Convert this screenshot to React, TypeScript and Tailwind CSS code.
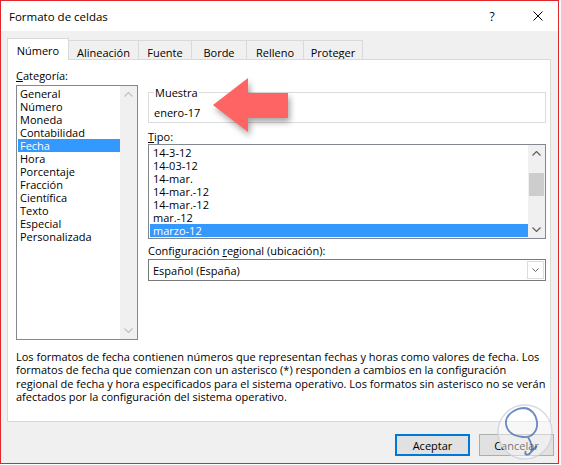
import React from 'react';

const categorias = [
  'General',
  'Número',
  'Moneda',
  'Contabilidad',
  'Fecha',
  'Hora',
  'Porcentaje',
  'Fracción',
  'Científica',
  'Texto',
  'Especial',
  'Personalizada',
];

const tipos = ['14-3-12', '14-03-12', '14-mar.', '14-mar.-12', '14-mar.-12', 'mar.-12', 'marzo-12'];

const tabs = [
  { label: 'Alineación', w: 'w-[70px]' },
  { label: 'Fuente', w: 'w-[53px]' },
  { label: 'Borde', w: 'w-[55px]' },
  { label: 'Relleno', w: 'w-[57px]' },
  { label: 'Proteger', w: 'w-[59px]' },
];

function Chevron({ up, color }: { up?: boolean; color: string }) {
  return (
    <svg width="9" height="5" viewBox="0 0 9 5">
      <polyline
        points={up ? '0.5,4.5 4.5,0.5 8.5,4.5' : '0.5,0.5 4.5,4.5 8.5,0.5'}
        fill="none"
        stroke={color}
        strokeWidth="1.2"
      />
    </svg>
  );
}

function ScrollBar({ enabled }: { enabled?: boolean }) {
  const color = enabled ? '#606060' : '#c2c2c2';
  return (
    <div className="w-[17px] bg-[#f0f0f0] flex flex-col">
      <div className="h-[17px] flex items-center justify-center">
        <Chevron up color={color} />
      </div>
      <div className="flex-1">
        {enabled && <div className="mt-[11px] ml-[1px] w-[15px] h-[23px] bg-[#cdcdcd]" />}
      </div>
      <div className="h-[17px] flex items-center justify-center">
        <Chevron color={color} />
      </div>
    </div>
  );
}

export default function App() {
  return (
    <div className="w-[561px] h-[465px] bg-white font-['Open_Sans',sans-serif] text-[11px] leading-[13px] text-black">
      <div className="relative w-[559px] h-[464px] border border-[#e3262b] bg-[#f0f0f0] flex flex-col overflow-hidden">
        {/* title bar */}
        <div className="h-[30px] bg-white flex items-center pl-[8px] text-[11.5px]">
          <span>Formato de celdas</span>
          <div className="ml-auto flex items-center pr-[15px]">
            <span className="w-[8px] text-center text-[12px]">?</span>
            <svg className="ml-[37px]" width="10" height="10" viewBox="0 0 10 10">
              <path d="M0.5 0.5 L9.5 9.5 M9.5 0.5 L0.5 9.5" stroke="#000" strokeWidth="1" />
            </svg>
          </div>
        </div>

        {/* tabs */}
        <div className="flex items-end h-[28px] pl-[6px]">
          <div className="relative z-10 -mb-px w-[62px] h-[22px] bg-white border-t border-l border-r border-[#d9d9d9] pt-[5px] text-center">
            Número
          </div>
          {tabs.map((t) => (
            <div key={t.label} className={`${t.w} h-[19px] border-t border-r border-[#d9d9d9] pt-[5px] text-center`}>
              {t.label}
            </div>
          ))}
        </div>

        {/* panel */}
        <div className="ml-[6px] w-[544px] h-[363px] border border-[#d9d9d9] bg-white pt-[9px] pl-[8px]">
          <div className="flex">
            <div className="w-[122px]">
              <div className="h-[13px]">
                <u>C</u>ategoría:
              </div>
              <div className="mt-[3px] h-[255px] border border-[#828790] flex">
                <div className="flex-1 pl-[1px] pt-[1px]">
                  {categorias.map((c) => (
                    <div
                      key={c}
                      className={`h-[13px] pl-[2px] ${c === 'Fecha' ? 'bg-[#3399ff] text-white' : ''}`}
                    >
                      {c}
                    </div>
                  ))}
                </div>
                <ScrollBar />
              </div>
            </div>

            <div className="ml-[10px] w-[398px]">
              <div className="relative mt-[23px] h-[31px] border border-[#dcdcdc] pl-[5px] pt-[13px]">
                <span className="absolute top-[-7px] left-[5px] bg-white px-[1px]">Muestra</span>
                enero-17
              </div>
              <div className="mt-[7px] h-[13px]">
                <u>T</u>ipo:
              </div>
              <div className="mt-[1px] h-[95px] border border-[#828790] flex">
                <div className="flex-1 pl-[1px] pt-[1px]">
                  {tipos.map((t, i) => (
                    <div
                      key={i}
                      className={`h-[13px] pl-[3px] ${t === 'marzo-12' ? 'bg-[#3399ff] text-white' : ''}`}
                    >
                      {t}
                    </div>
                  ))}
                </div>
                <ScrollBar enabled />
              </div>
              <div className="mt-[5px] h-[13px]">
                Configuración <u>r</u>egional (ubicación):
              </div>
              <div className="mt-[2px] h-[22px] border border-[#7a7a7a] flex items-center">
                <span className="pl-[4px] flex-1">Español (España)</span>
                <div className="w-[17px] h-[18px] mr-[1px] border border-[#dcdcdc] bg-white flex items-center justify-center">
                  <svg width="7" height="4" viewBox="0 0 7 4">
                    <polyline points="0.5,0.5 3.5,3.5 6.5,0.5" fill="none" stroke="#606060" strokeWidth="1" />
                  </svg>
                </div>
              </div>
            </div>
          </div>

          <p className="mt-[10px] leading-[13.3px] whitespace-nowrap">
            Los formatos de fecha contienen números que representan fechas y horas como valores de fecha. Los
            <br />
            formatos de fecha que comienzan con un asterisco (*) responden a cambios en la configuración
            <br />
            regional de fecha y hora especificados para el sistema operativo. Los formatos sin asterisco no se verán
            <br />
            afectados por la configuración del sistema operativo.
          </p>
        </div>

        {/* buttons */}
        <div className="mt-[12px] flex justify-end gap-[9px] pr-[4px]">
          <button className="w-[75px] h-[22px] border-2 border-[#0078d7] bg-[#e1e1e1] flex items-center justify-center">
            Aceptar
          </button>
          <button className="w-[75px] h-[22px] border border-[#adadad] bg-[#e1e1e1] flex items-center justify-center">
            Cancelar
          </button>
        </div>

        {/* red arrow overlay */}
        <svg
          className="absolute left-[211px] top-[75px] drop-shadow-[2px_4px_3px_rgba(0,0,0,0.35)]"
          width="84"
          height="64"
          viewBox="0 0 84 64"
        >
          <polygon points="1,29 36,2 36,17 76,17 76,42 36,42 36,56" fill="#ff6464" />
        </svg>

        {/* watermark */}
        <svg className="absolute left-[494px] top-[401px] opacity-80" width="60" height="60" viewBox="0 0 60 60">
          <circle cx="30" cy="30" r="27" fill="white" fillOpacity="0.55" stroke="#cfd4dc" strokeWidth="1.5" />
          <path
            d="M30 6 C20 6 10 13 11 22 C12 30 18 34 28 35 C36 36 43 30 42 20 C41 12 36 7 30 6"
            fill="none"
            stroke="#4a6fb5"
            strokeWidth="1.8"
          />
          <path d="M33 35 C36 40 38 46 36 50 C34 54 28 53 31 49 M36 50 L42 44" fill="none" stroke="#4a6fb5" strokeWidth="1.8" />
        </svg>
      </div>
    </div>
  );
}
